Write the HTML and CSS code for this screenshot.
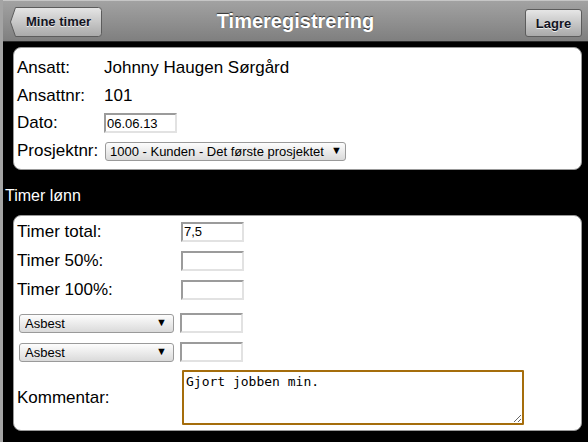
FILE: index.html
```html
<!DOCTYPE html>
<html lang="no">
<head>
  <meta charset="UTF-8">
  <title>Timeregistrering</title>
  <link rel="stylesheet" href="styles.css">
</head>
<body>
<div class="header">
  <div class="header-left">
    <button class="btn btn-back">
      <svg class="btn-shape" width="92" height="30" viewBox="0 0 92 30">
        <defs>
          <linearGradient id="backGrad" x1="0" y1="0" x2="0" y2="1">
            <stop offset="0" stop-color="#e6e6e6"/>
            <stop offset="1" stop-color="#a9a9a9"/>
          </linearGradient>
        </defs>
        <path d="M5.5 0.5 H88.5 Q91.5 0.5 91.5 3.5 V26.5 Q91.5 29.5 88.5 29.5 H5.5 L0.5 15 Z" fill="url(#backGrad)" stroke="#5c5c5c"/>
      </svg>
      <span class="btn-text">Mine timer</span>
    </button>
  </div>
  <h1>Timeregistrering</h1>
  <div class="header-right">
    <button class="btn btn-save">Lagre</button>
  </div>
</div>

<div class="card card-info">
  <div class="row row-a">
    <span class="label">Ansatt:</span>
    <span class="value value-name">Johnny Haugen Sørgård</span>
  </div>
  <div class="row row-a">
    <span class="label">Ansattnr:</span>
    <span class="value">101</span>
  </div>
  <div class="row row-b">
    <label class="label" for="dato">Dato:</label>
    <input type="text" id="dato" class="field field-date" value="06.06.13">
  </div>
  <div class="row row-c">
    <label class="label" for="prosjekt">Prosjektnr:</label>
    <span class="select-wrap select-project">
      <select id="prosjekt">
        <option>1000 - Kunden - Det første prosjektet</option>
      </select>
    </span>
  </div>
</div>

<h3 class="section-title">Timer lønn</h3>

<div class="card card-hours">
  <div class="row row-h">
    <label class="label label-wide" for="total">Timer total:</label>
    <input type="text" id="total" class="field field-hours" value="7,5">
  </div>
  <div class="row row-h">
    <label class="label label-wide" for="t50">Timer 50%:</label>
    <input type="text" id="t50" class="field field-hours" value="">
  </div>
  <div class="row row-h">
    <label class="label label-wide" for="t100">Timer 100%:</label>
    <input type="text" id="t100" class="field field-hours" value="">
  </div>
  <div class="row row-h row-first-extra">
    <span class="select-wrap select-extra">
      <select>
        <option>Asbest</option>
      </select>
    </span>
    <input type="text" class="field field-hours" value="">
  </div>
  <div class="row row-h">
    <span class="select-wrap select-extra">
      <select>
        <option>Asbest</option>
      </select>
    </span>
    <input type="text" class="field field-hours" value="">
  </div>
  <div class="row row-comment">
    <label class="label label-wide" for="kommentar">Kommentar:</label>
    <textarea id="kommentar" class="comment">Gjort jobben min.</textarea>
  </div>
</div>

</body>
</html>
```

FILE: styles.css
```css
body {
  margin: 0;
  background: #000;
  border-left: 3px solid #a4a4a4;
  min-height: 442px;
  font-family: "Liberation Sans", Arial, sans-serif;
  color: #000;
}

.header {
  display: grid;
  grid-template-columns: 1fr auto 1fr;
  align-items: center;
  height: 40px;
  border-top: 1px solid #c6c6c6;
  border-bottom: 1px solid #2a2a2a;
  background: linear-gradient(#a2a2a2, #7f7f7f);
}

.header h1 {
  margin: 0;
  font-size: 20px;
  font-weight: bold;
  color: #fff;
  text-shadow: 0 -1px 1px #333;
}

.header-left {
  display: flex;
  padding-left: 7px;
}

.header-right {
  display: flex;
  justify-content: flex-end;
  padding-right: 6px;
}

.btn {
  font-family: "Liberation Sans", Arial, sans-serif;
  font-size: 13px;
  font-weight: bold;
  color: #111322;
  text-shadow: 0 1px 0 #eee;
  border: 1px solid #5c5c5c;
  border-radius: 3px;
  background: linear-gradient(#e6e6e6, #a9a9a9);
  cursor: pointer;
}

.btn-back {
  position: relative;
  width: 92px;
  height: 30px;
  padding: 0 0 0 5px;
  margin-top: 1px;
  border: none;
  background: none;
}

.btn-shape {
  position: absolute;
  left: 0;
  top: 0;
}

.btn-text {
  position: relative;
}

.btn-save {
  height: 28px;
  width: 57px;
  padding: 0;
  margin-top: 4px;
}

.card {
  background: #fff;
  border: 1px solid #999;
  border-radius: 8px;
  margin: 0 6px 0 10px;
  padding: 0 3px;
  font-size: 17px;
}

.card-info {
  margin-top: 5px;
  padding-top: 6px;
  padding-bottom: 4px;
}

.card-hours {
  padding-top: 1px;
  padding-bottom: 5px;
}

.row {
  display: flex;
  align-items: center;
}

.row-a { height: 28px; }
.row-b { height: 26px; }
.row-c { height: 29px; }
.row-h { height: 29px; }

.row-first-extra {
  margin-top: 4px;
}

.row-comment {
  margin-top: 4px;
}

.label {
  width: 87px;
  flex-shrink: 0;
}

.label-wide {
  width: 164px;
}

.value-name {
  padding-left: 2px;
}

.value {
  padding-left: 0;
}

.field {
  box-sizing: border-box;
  height: 20px;
  padding: 0 1px;
  border-width: 2px;
  border-style: solid;
  border-color: #9b9b9b #e2e2e2 #e2e2e2 #9b9b9b;
  font-family: "Liberation Sans", Arial, sans-serif;
  font-size: 13px;
  color: #000;
  background: #fff;
}

.field-date {
  width: 73px;
}

.field-hours {
  width: 63px;
}

.select-wrap {
  position: relative;
  display: inline-block;
}

.select-wrap select {
  appearance: none;
  -webkit-appearance: none;
  box-sizing: border-box;
  height: 19px;
  margin: 0;
  border: 1px solid #9a9a9a;
  border-radius: 3px;
  background: linear-gradient(#fdfdfd, #dadada);
  font-family: "Liberation Sans", Arial, sans-serif;
  font-size: 13px;
  color: #000;
}

.select-wrap::after {
  content: "\25BC";
  position: absolute;
  top: 4px;
  font-size: 11px;
  line-height: 11px;
  color: #000;
  pointer-events: none;
}

.select-project {
  margin-left: 1px;
}

.select-project select {
  width: 241px;
  padding: 0 0 0 4px;
}

.select-project::after {
  right: 4px;
}

.select-extra {
  margin-left: 2px;
  margin-right: 6px;
}

.select-extra select {
  width: 155px;
  padding: 0 0 0 5px;
}

.select-extra::after {
  right: 7px;
}

.comment {
  box-sizing: border-box;
  width: 342px;
  height: 55px;
  margin: 0 0 0 1px;
  padding: 2px;
  border: 2px solid #a56d0c;
  border-radius: 1px;
  font-family: "DejaVu Sans Mono", monospace;
  font-size: 13px;
  color: #000;
  outline: none;
}

.section-title {
  margin: 16px 0 9px 2px;
  font-size: 16px;
  font-weight: normal;
  line-height: 20px;
  color: #fff;
}
```
